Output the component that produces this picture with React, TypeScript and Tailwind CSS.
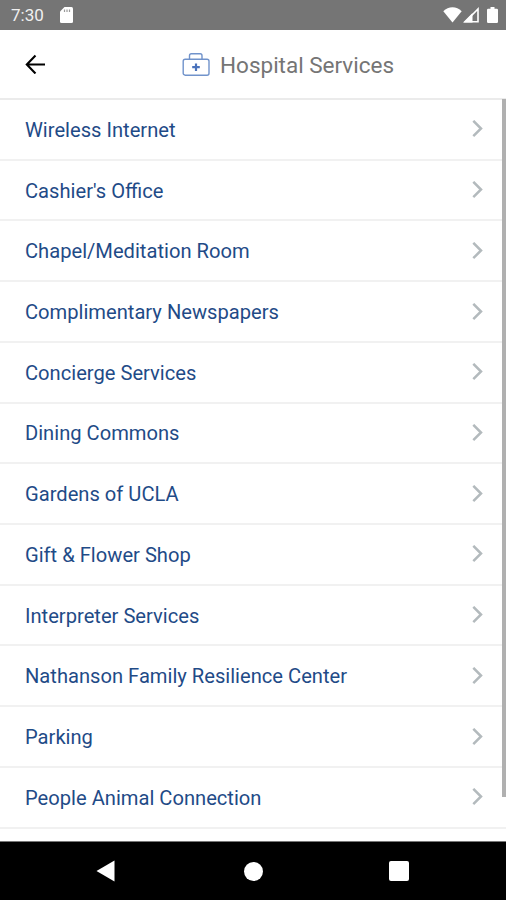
interface ServiceRowProps {
  label: string;
}

const services = [
  "Wireless Internet",
  "Cashier's Office",
  "Chapel/Meditation Room",
  "Complimentary Newspapers",
  "Concierge Services",
  "Dining Commons",
  "Gardens of UCLA",
  "Gift & Flower Shop",
  "Interpreter Services",
  "Nathanson Family Resilience Center",
  "Parking",
  "People Animal Connection",
];

function StatusBar() {
  return (
    <div className="flex h-[30px] shrink-0 items-center bg-[#757575] pl-[11px] pr-[8px] text-white">
      <span className="pt-px text-[17px] leading-[29px] text-[#f0f0f0]">7:30</span>
      <svg className="ml-[16px] h-[16px] w-[13px]" viewBox="0 0 13 16" fill="currentColor">
        <path d="M4.5 0H11.5Q13 0 13 1.5V14.5Q13 16 11.5 16H1.5Q0 16 0 14.5V4.5Z" />
        <path d="M4.5 2.5V5M7 2.5V5M9.5 2.5V5" stroke="#9a9a9a" strokeWidth="1.2" />
      </svg>
      <div className="ml-auto flex items-center">
        {/* Wifi */}
        <svg className="h-[16px] w-[19px]" viewBox="0 0 19 16" fill="currentColor">
          <path d="M9.5 15.5L0.3 4.2Q4.3 0.3 9.5 0.3T18.7 4.2Z" />
        </svg>
        {/* Signal */}
        <svg className="ml-px h-[16px] w-[16px]" viewBox="0 0 16 16">
          <path d="M2.5 14.8L15 2V14.8Z" fill="none" stroke="white" strokeWidth="1.6" />
          <path d="M0 15.5L9.5 6V15.5Z" fill="white" />
        </svg>
        {/* Battery */}
        <svg className="ml-[8px] h-[16px] w-[11px]" viewBox="0 0 11 16" fill="currentColor">
          <path d="M3.5 0H7.5V1.8H9.8Q11 1.8 11 3V14.8Q11 16 9.8 16H1.2Q0 16 0 14.8V3Q0 1.8 1.2 1.8H3.5Z" />
        </svg>
      </div>
    </div>
  );
}

function Header() {
  return (
    <header className="flex h-[70px] shrink-0 items-center border-b-2 border-[#ebebeb] bg-white pl-[25px]">
      <button aria-label="Back">
        <svg className="h-[20px] w-[20px]" viewBox="0 0 20 20" fill="none" stroke="black" strokeWidth="2.1">
          <path d="M10.5 1.5L1.8 10.5L10.5 19.5M1.8 10.5H20" />
        </svg>
      </button>
      <div className="ml-[137px] flex items-center pt-px">
        <svg className="h-[24px] w-[28px]" viewBox="0 0 28 24" fill="none" stroke="#7193cb" strokeWidth="1.4">
          <rect x="1.2" y="6.2" width="25.8" height="16" rx="2" />
          <path d="M7.5 6.2V2.7Q7.5 0.8 9.3 0.8H18.2Q20 0.8 20 2.7V6.2" />
          <path d="M14 10.5V18M10.2 14.2H17.8" stroke="#4a72bb" strokeWidth="2.2" />
        </svg>
        <h1 className="ml-[10px] whitespace-nowrap text-[22.5px] font-normal leading-[28px] text-[#757575]">
          Hospital Services
        </h1>
      </div>
    </header>
  );
}

function ServiceRow({ label }: ServiceRowProps) {
  return (
    <li className="flex h-[60.72px] items-center justify-between border-b-2 border-[#f1f1f1] pl-[25px] pr-[23px]">
      <span className="whitespace-nowrap pt-px text-[20.15px] leading-[28px] text-[#1f4b87]">
        {label}
      </span>
      <svg className="h-[18px] w-[11px]" viewBox="0 0 11 18" fill="none" stroke="#b3babd" strokeWidth="2.5">
        <path d="M1.3 0.8L9 8.5L1.3 16.2" />
      </svg>
    </li>
  );
}

function NavigationBar() {
  return (
    <nav className="flex h-[59px] shrink-0 items-center border-t border-[#777] bg-black pl-[96px] text-white">
      <svg className="h-[22px] w-[19px]" viewBox="0 0 19 22" fill="currentColor">
        <path d="M0.5 11L18.5 0.5V21.5Z" />
      </svg>
      <div className="ml-[129px] size-[19px] rounded-full bg-white" />
      <div className="ml-[126px] size-[20px] rounded-[2px] bg-white" />
    </nav>
  );
}

export default function App() {
  return (
    <div className="flex h-[900px] w-[506px] flex-col overflow-hidden bg-white font-['Roboto',sans-serif]">
      <StatusBar />
      <Header />
      <main className="relative -mt-px min-h-0 flex-1 overflow-hidden">
        <ul className="pt-px">
          {services.map((service) => (
            <ServiceRow key={service} label={service} />
          ))}
        </ul>
        {/* Scrollbar thumb */}
        <div className="absolute right-0 top-0 h-[698px] w-[4px] bg-[#b0b0b0]" />
      </main>
      <NavigationBar />
    </div>
  );
}
